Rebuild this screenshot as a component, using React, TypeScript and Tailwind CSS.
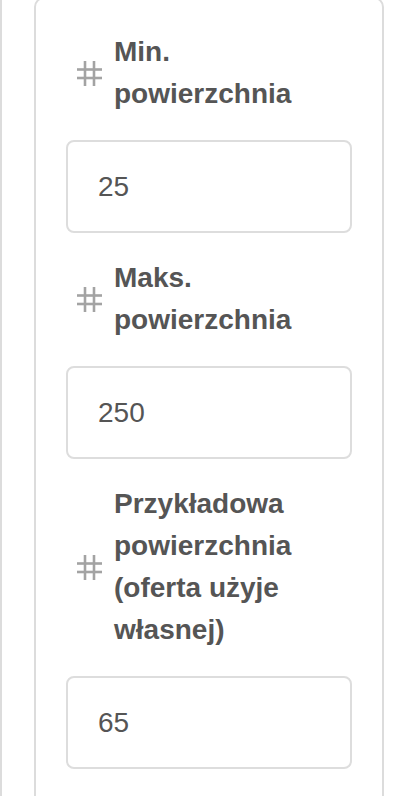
import React from 'react'

const fields = [
  { label: 'Min. powierzchnia', value: '25' },
  { label: 'Maks. powierzchnia', value: '250' },
  { label: 'Przykładowa powierzchnia (oferta użyje własnej)', value: '65' },
]

function HashIcon() {
  return (
    <svg width="25" height="25" viewBox="0 0 25 25" fill="none" stroke="#a3a3a3" strokeWidth="2.6">
      <line x1="8" y1="0" x2="8" y2="25" />
      <line x1="17" y1="0" x2="17" y2="25" />
      <line x1="0" y1="8.5" x2="25" y2="8.5" />
      <line x1="0" y1="17" x2="25" y2="17" />
    </svg>
  )
}

export default function App() {
  return (
    <div
      className="h-[796px] w-[416px] overflow-hidden bg-white border-l-2 border-[#dcdcdc] pl-[32px]"
      style={{ fontFamily: '"Liberation Sans", Arial, sans-serif' }}
    >
      <div className="-mt-[3px] w-[350px] min-h-[820px] rounded-[10px] border-2 border-[#dcdcdc] px-[30px] pt-[32px]">
        {fields.map((f) => (
          <div key={f.label} className="mb-[24px]">
            <label className="flex items-center gap-[12px] pl-[11px] mb-[25px]">
              <span className="shrink-0 flex">
                <HashIcon />
              </span>
              <span className="flex-1 text-[28px] leading-[42px] font-bold text-[#555555]">{f.label}</span>
            </label>
            <input
              type="text"
              defaultValue={f.value}
              className="block w-full h-[93px] rounded-[8px] border-2 border-[#dddddd] bg-white px-[30px] text-[28px] text-[#555555] outline-none"
              style={{ fontFamily: '"Liberation Sans", Arial, sans-serif' }}
            />
          </div>
        ))}
      </div>
    </div>
  )
}
